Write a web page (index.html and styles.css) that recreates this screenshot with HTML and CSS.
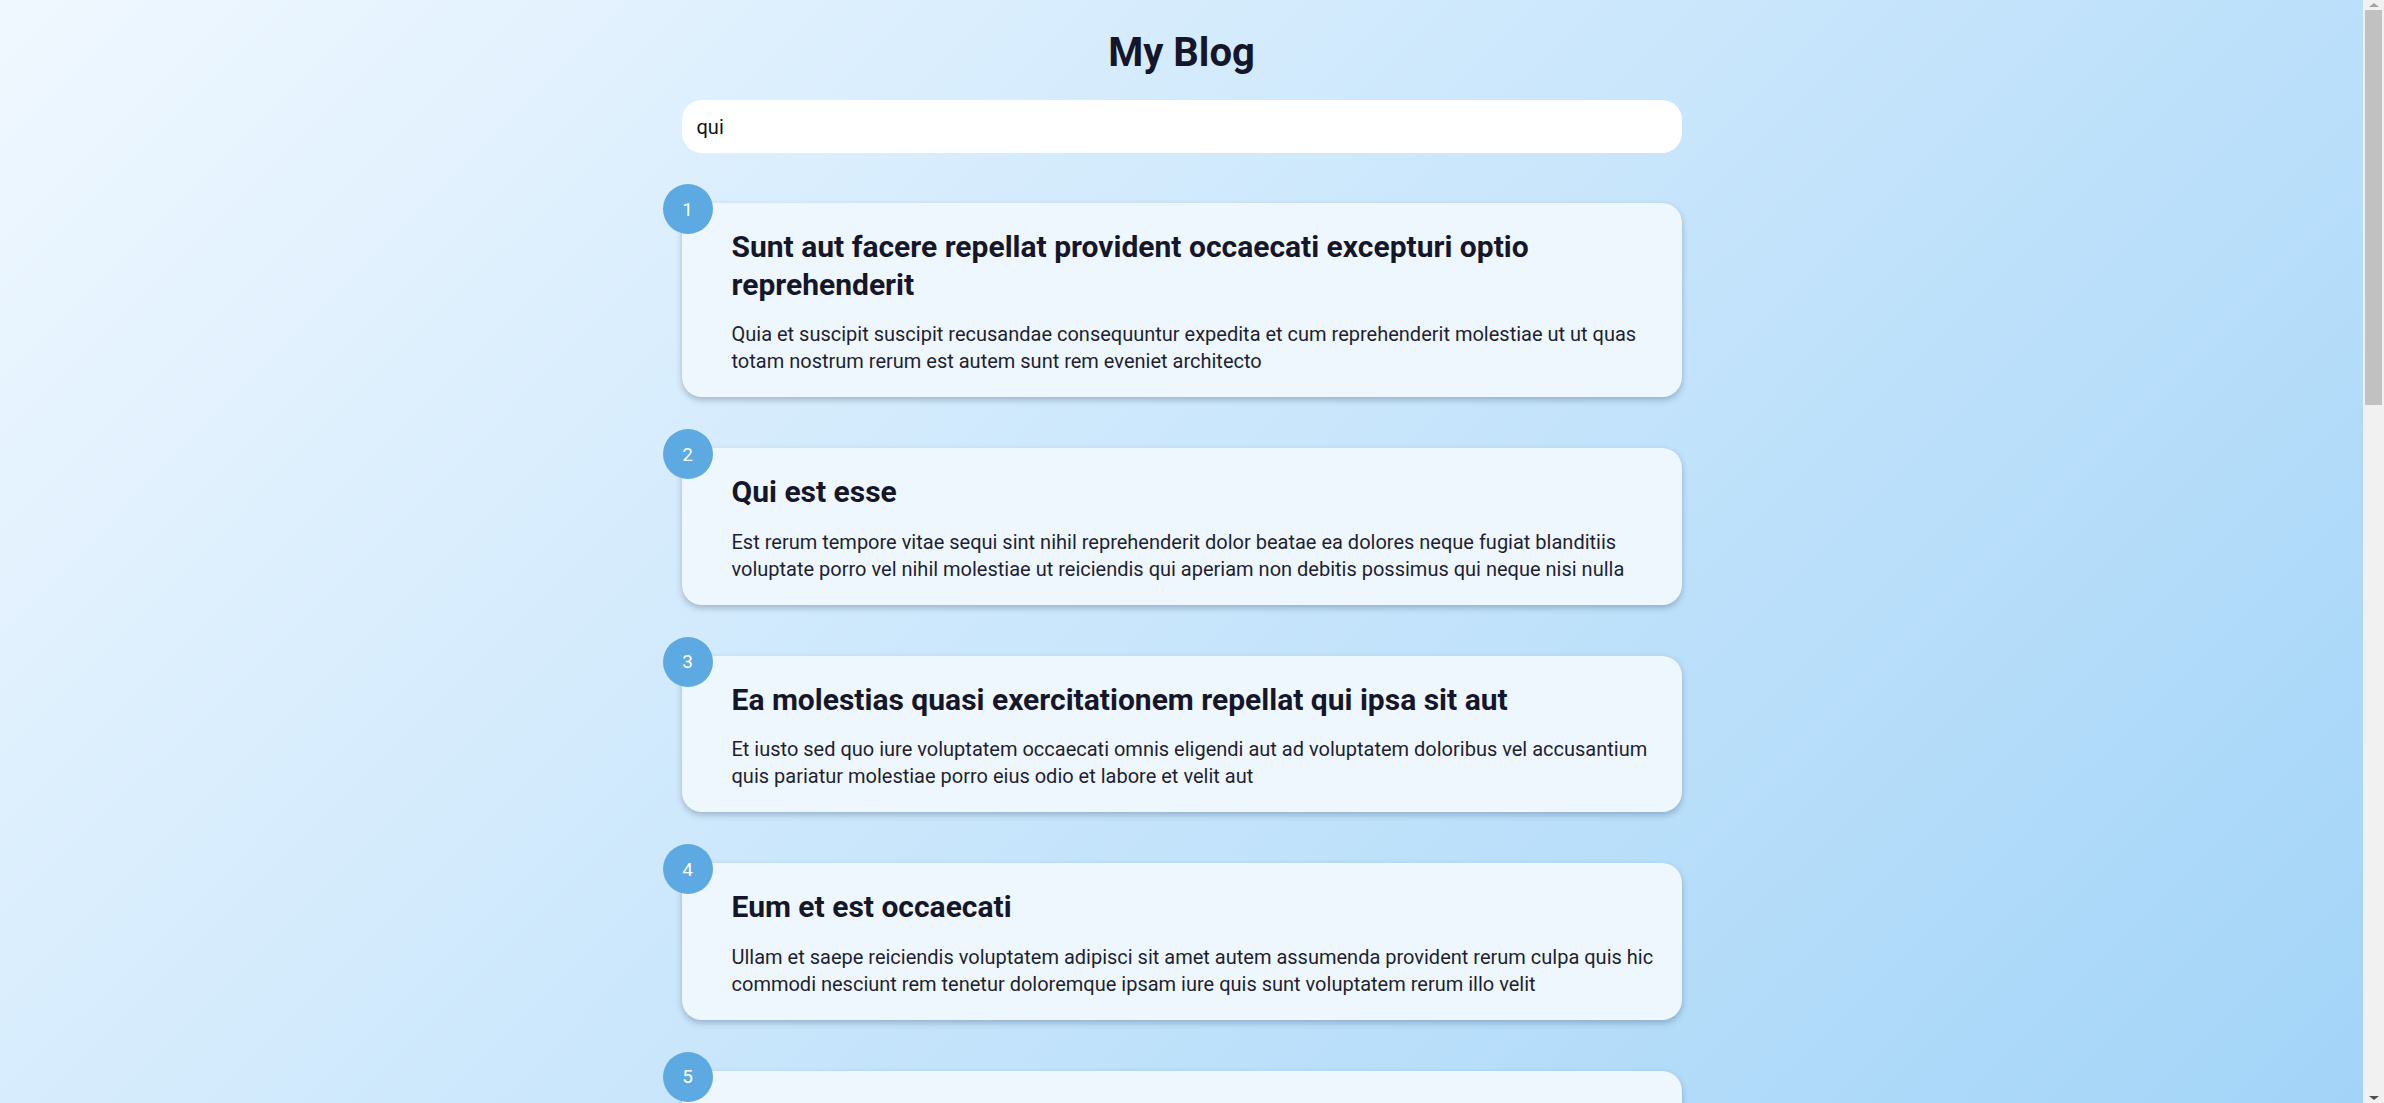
FILE: index.html
```html
<!DOCTYPE html>
<html lang="en">
<head>
<meta charset="utf-8">
<title>My Blog</title>
<link rel="stylesheet" href="styles.css">
</head>
<body>
<main class="container">
  <h1 class="page-title">My Blog</h1>
  <input class="search" type="text" value="qui">
  <ul class="posts">
    <li class="post"><span class="badge">1</span><h2 class="post-title">Sunt aut facere repellat provident occaecati excepturi optio reprehenderit</h2><p class="post-body">Quia et suscipit suscipit recusandae consequuntur expedita et cum reprehenderit molestiae ut ut quas totam nostrum rerum est autem sunt rem eveniet architecto</p></li>
    <li class="post"><span class="badge">2</span><h2 class="post-title">Qui est esse</h2><p class="post-body">Est rerum tempore vitae sequi sint nihil reprehenderit dolor beatae ea dolores neque fugiat blanditiis voluptate porro vel nihil molestiae ut reiciendis qui aperiam non debitis possimus qui neque nisi nulla</p></li>
    <li class="post"><span class="badge">3</span><h2 class="post-title">Ea molestias quasi exercitationem repellat qui ipsa sit aut</h2><p class="post-body">Et iusto sed quo iure voluptatem occaecati omnis eligendi aut ad voluptatem doloribus vel accusantium quis pariatur molestiae porro eius odio et labore et velit aut</p></li>
    <li class="post"><span class="badge">4</span><h2 class="post-title">Eum et est occaecati</h2><p class="post-body">Ullam et saepe reiciendis voluptatem adipisci sit amet autem assumenda provident rerum culpa quis hic commodi nesciunt rem tenetur doloremque ipsam iure quis sunt voluptatem rerum illo velit</p></li>
    <li class="post"><span class="badge">5</span><h2 class="post-title">Nesciunt quas odio</h2><p class="post-body">Repudiandae veniam quaerat sunt sed alias aut fugiat sit autem sed est voluptatem omnis possimus esse voluptatibus quis est aut tenetur dolor neque</p></li>
    <li class="post"><span class="badge">6</span><h2 class="post-title">Dolorem eum magni eos aperiam quia</h2><p class="post-body">Ut aspernatur corporis harum nihil quis provident sequi mollitia nobis aliquid molestiae perspiciatis et ea nemo ab reprehenderit accusantium quas voluptate dolores velit et doloremque molestiae</p></li>
    <li class="post"><span class="badge">7</span><h2 class="post-title">Magnam facilis autem</h2><p class="post-body">Dolore placeat quibusdam ea quo vitae magni quis enim qui quis quo nemo aut saepe quidem repellat excepturi ut quia sunt ut sequi eos ea sed quas</p></li>
    <li class="post"><span class="badge">8</span><h2 class="post-title">Dolorem dolore est ipsam</h2><p class="post-body">Dignissimos aperiam dolorem qui eum facilis quibusdam animi sint suscipit qui sint possimus cum quaerat magni maiores excepturi ipsam ut commodi dolor voluptatum modi aut vitae</p></li>
    <li class="post"><span class="badge">9</span><h2 class="post-title">Nesciunt iure omnis dolorem tempora et accusantium</h2><p class="post-body">Consectetur animi nesciunt iure dolore enim quia ad veniam autem ut quam aut nobis et est aut quod aut provident voluptas autem voluptas</p></li>
    <li class="post"><span class="badge">10</span><h2 class="post-title">Optio molestias id quia eum</h2><p class="post-body">Quo et expedita modi cum officia vel magni doloribus qui repudiandae vero nisi sit quos veniam quod sed accusamus veritatis error</p></li>
    <li class="post"><span class="badge">11</span><h2 class="post-title">Et ea vero quia laudantium autem</h2><p class="post-body">Delectus reiciendis molestiae occaecati non minima eveniet qui voluptatibus accusamus in eum beatae sit vel qui neque voluptates ut commodi qui incidunt ut animi commodi</p></li>
    <li class="post"><span class="badge">12</span><h2 class="post-title">In quibusdam tempore odit est dolorem</h2><p class="post-body">Itaque id aut magnam praesentium quia et ea odit et ea voluptas et sapiente quia nihil amet occaecati quia id voluptatem incidunt ea est distinctio odio</p></li>
  </ul>
</main>
<div class="scrollbar" aria-hidden="true">
  <span class="scroll-arrow scroll-up"></span>
  <span class="scroll-thumb"></span>
  <span class="scroll-arrow scroll-down"></span>
</div>
</body>
</html>
```

FILE: styles.css
```css
* { box-sizing: border-box; }

html { min-height: 100%; }

body {
  margin: 0;
  padding-right: 21px;
  min-height: 100vh;
  font-family: Roboto, "Liberation Sans", Arial, sans-serif;
  color: #1c1c2e;
  background: linear-gradient(135deg, #f0f8ff 0%, #a2d4f8 100%);
  background-attachment: fixed;
}

.container {
  max-width: 1000px;
  margin: 0 auto;
  padding: 29px 0 60px;
}

.page-title {
  margin: 0 0 24px;
  font-size: 40px;
  font-weight: 700;
  line-height: normal;
  text-align: center;
  color: #16162b;
}

.search {
  display: block;
  width: 100%;
  height: 53px;
  padding: 0 15px;
  border: none;
  border-radius: 20px;
  background: #ffffff;
  font-family: Roboto, "Liberation Sans", Arial, sans-serif;
  font-size: 20px;
  color: #111111;
  outline: none;
}

.posts {
  list-style: none;
  margin: 50px 0 0;
  padding: 0;
  display: flex;
  flex-direction: column;
  gap: 51px;
}

.post {
  position: relative;
  padding: 25px 20px 22px 50px;
  border-radius: 20px;
  background: #eef7fe;
  box-shadow: 0 3px 6px rgba(40, 60, 90, 0.3);
}

.badge {
  position: absolute;
  top: -19px;
  left: -19px;
  width: 50px;
  height: 50px;
  border-radius: 50%;
  background: #5da9e1;
  color: #ffffff;
  font-size: 19px;
  display: flex;
  align-items: center;
  justify-content: center;
}

.post-title {
  margin: 0 0 18px;
  font-size: 30px;
  font-weight: 700;
  line-height: 37.5px;
  color: #16162b;
}

.post-body {
  margin: 0;
  font-size: 20px;
  line-height: 27px;
  color: #1f1f30;
}

/* classic scrollbar look */
.scrollbar {
  position: fixed;
  top: 0;
  right: 0;
  width: 21px;
  height: 100vh;
  background: #f1f1f1;
}

.scroll-thumb {
  position: absolute;
  top: 10px;
  left: 2px;
  width: 17px;
  height: 395px;
  background: #c1c1c1;
}

.scroll-arrow {
  position: absolute;
  left: 6px;
  width: 0;
  height: 0;
  border-left: 5px solid transparent;
  border-right: 5px solid transparent;
}

.scroll-up {
  top: 3px;
  border-bottom: 4px solid #a3a3a3;
}

.scroll-down {
  bottom: 3px;
  border-top: 4px solid #505050;
}
```
